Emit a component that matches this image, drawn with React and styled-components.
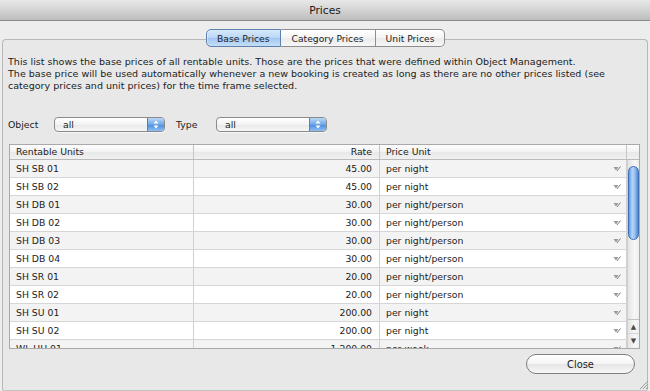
import styled, { createGlobalStyle } from "styled-components";

const GlobalStyle = createGlobalStyle`
  html, body {
    margin: 0;
    padding: 0;
    background: #ededed;
  }
  body {
    font-family: "DejaVu Sans", "Liberation Sans", sans-serif;
    font-size: 9.3px;
    color: #1c1c1c;
  }
`;

const rows = [
  { name: "SH SB 01", rate: "45.00", unit: "per night" },
  { name: "SH SB 02", rate: "45.00", unit: "per night" },
  { name: "SH DB 01", rate: "30.00", unit: "per night/person" },
  { name: "SH DB 02", rate: "30.00", unit: "per night/person" },
  { name: "SH DB 03", rate: "30.00", unit: "per night/person" },
  { name: "SH DB 04", rate: "30.00", unit: "per night/person" },
  { name: "SH SR 01", rate: "20.00", unit: "per night/person" },
  { name: "SH SR 02", rate: "20.00", unit: "per night/person" },
  { name: "SH SU 01", rate: "200.00", unit: "per night" },
  { name: "SH SU 02", rate: "200.00", unit: "per night" },
  { name: "WL UH 01", rate: "1,200.00", unit: "per week" },
];

const tabs = ["Base Prices", "Category Prices", "Unit Prices"];

function PopupArrows() {
  return (
    <svg width="6" height="9" viewBox="0 0 6 9">
      <path d="M3 0.5 L5.5 3.5 L0.5 3.5 Z" fill="#fff" />
      <path d="M3 8.5 L5.5 5.5 L0.5 5.5 Z" fill="#fff" />
    </svg>
  );
}

function CellArrow() {
  return (
    <svg width="8" height="6" viewBox="0 0 8 6">
      <path d="M0.5 1 L5.5 1 L3 4.5 Z" fill="#9a9a9a" />
      <path d="M4 5 L7.5 0.5" stroke="#7d7d7d" strokeWidth="1" fill="none" />
    </svg>
  );
}

function Select({ value }) {
  return (
    <SelectBox>
      <SelectValue>{value}</SelectValue>
      <SelectCap>
        <PopupArrows />
      </SelectCap>
    </SelectBox>
  );
}

export default function App() {
  return (
    <>
      <GlobalStyle />
      <Window>
        <TitleBar>Prices</TitleBar>
        <Tabs>
          {tabs.map((t, i) => (
            <Tab key={t} $active={i === 0} $first={i === 0} $last={i === tabs.length - 1}>
              {t}
            </Tab>
          ))}
        </Tabs>
        <Panel>
          <Description>
            This list shows the base prices of all rentable units. Those are the prices that were defined within Object Management.
            <br />
            The base price will be used automatically whenever a new booking is created as long as there are no other prices listed (see
            <br />
            category prices and unit prices) for the time frame selected.
          </Description>

          <Filters>
            <FilterLabel>Object</FilterLabel>
            <Select value="all" />
            <FilterLabel $gap>Type</FilterLabel>
            <Select value="all" />
          </Filters>

          <Table>
            <HeaderRow>
              <HeadCell>Rentable Units</HeadCell>
              <HeadCell $align="right">Rate</HeadCell>
              <HeadCell>Price Unit</HeadCell>
              <HeadCorner />
            </HeaderRow>
            <Body>
              <Rows>
                {rows.map((r, i) => (
                  <Row key={r.name} $odd={i % 2 === 0}>
                    <Cell>{r.name}</Cell>
                    <Cell $align="right">{r.rate}</Cell>
                    <UnitCell>
                      <span>{r.unit}</span>
                      <CellArrow />
                    </UnitCell>
                  </Row>
                ))}
              </Rows>
              <ScrollTrack>
                <Thumb />
                <Arrows>
                  <ArrowButton>▲</ArrowButton>
                  <ArrowButton>▼</ArrowButton>
                </Arrows>
              </ScrollTrack>
            </Body>
          </Table>

          <Footer>
            <CloseButton>Close</CloseButton>
          </Footer>
        </Panel>
        <Grip>
          <svg width="9" height="9" viewBox="0 0 9 9">
            <path d="M1 9 L9 1 M4 9 L9 4 M7 9 L9 7" stroke="#9a9a9a" strokeWidth="1" />
          </svg>
        </Grip>
      </Window>
    </>
  );
}

const Window = styled.div`
  position: relative;
  width: 650px;
  height: 391px;
  display: flex;
  flex-direction: column;
  background: #ededed;
  overflow: hidden;
`;

const TitleBar = styled.div`
  height: 20px;
  border-bottom: 1px solid #8a8a8a;
  background: linear-gradient(#e8e8e8, #d2d2d2 55%, #bcbcbc);
  display: flex;
  align-items: center;
  justify-content: center;
  font-size: 10.7px;
  color: #1a1a1a;
`;

const Tabs = styled.div`
  position: relative;
  z-index: 1;
  display: flex;
  align-self: flex-start;
  margin: 8px 0 -8px 206px;
  height: 18px;
`;

const Tab = styled.div`
  box-sizing: border-box;
  height: 18px;
  padding: 0 ${(p) => (p.$first || p.$last ? 10 : 11)}px;
  display: flex;
  align-items: center;
  font-size: 9.2px;
  color: #1e1e1e;
  border: 1px solid ${(p) => (p.$active ? "#5f82ad" : "#8e8e8e")};
  border-left-width: ${(p) => (p.$first ? 1 : 0)}px;
  border-radius: ${(p) => (p.$first ? "5px 0 0 5px" : p.$last ? "0 5px 5px 0" : "0")};
  background: ${(p) =>
    p.$active
      ? "linear-gradient(#d8e9fb, #b9d6f5 50%, #a2c7f1 52%, #c4def8)"
      : "linear-gradient(#ffffff, #f4f4f4 50%, #ebebeb 52%, #f6f6f6)"};
  box-shadow: ${(p) => (p.$active ? "inset 1px 0 0 rgba(255,255,255,0.4)" : "none")};
`;

const Panel = styled.div`
  flex: 1;
  margin: 0 2px;
  border: 1px solid #b8b8b8;
  border-bottom: 1px solid #c4c4c4;
  border-radius: 4px 4px 2px 2px;
  background: #e8e8e8;
  display: flex;
  flex-direction: column;
`;

const Description = styled.p`
  margin: 16px 0 0 5px;
  font-size: 9.55px;
  line-height: 12px;
  white-space: nowrap;
`;

const Filters = styled.div`
  display: flex;
  align-items: center;
  height: 16px;
  margin: 24px 0 0 5px;
`;

const FilterLabel = styled.span`
  width: ${(p) => (p.$gap ? 40 : 46)}px;
  margin-left: ${(p) => (p.$gap ? 11 : 0)}px;
`;

const SelectBox = styled.div`
  box-sizing: border-box;
  width: 111px;
  height: 15px;
  display: flex;
  border: 1px solid #8a8a8a;
  border-radius: 4px;
  overflow: hidden;
  background: linear-gradient(#ffffff, #f3f3f3 50%, #e8e8e8 52%, #f7f7f7);
  box-shadow: 0 1px 0 rgba(255, 255, 255, 0.6);
`;

const SelectValue = styled.span`
  flex: 1;
  padding-left: 8px;
  line-height: 13px;
`;

const SelectCap = styled.span`
  width: 16px;
  display: flex;
  align-items: center;
  justify-content: center;
  border-left: 1px solid #5d7fb0;
  background: linear-gradient(#b9d7f7, #6ea7e8 50%, #4a8ce0 52%, #8ec0f3);
`;

const Table = styled.div`
  margin: 12px 7px 0 6px;
  border: 1px solid #a9a9a9;
  background: #fff;
`;

const HeaderRow = styled.div`
  display: grid;
  grid-template-columns: 184px 186px 247px 1fr;
  height: 15px;
  box-sizing: border-box;
  border-bottom: 1px solid #b9b9b9;
  background: linear-gradient(#fdfdfd, #f2f2f2 50%, #e8e8e8 52%, #f1f1f1);
`;

const HeadCell = styled.div`
  border-right: 1px solid #c6c6c6;
  padding: 0 ${(p) => (p.$align === "right" ? 7 : 6)}px 0 6px;
  text-align: ${(p) => p.$align || "left"};
  line-height: 14px;
  color: #222;
`;

const HeadCorner = styled.div``;

const Body = styled.div`
  display: flex;
  height: 188px;
  overflow: hidden;
`;

const Rows = styled.div`
  width: 617px;
  display: flex;
  flex-direction: column;
`;

const Row = styled.div`
  flex: none;
  display: grid;
  grid-template-columns: 184px 186px 247px;
  height: 18px;
  box-sizing: border-box;
  border-bottom: 1px solid #d6d6d6;
  background: ${(p) => (p.$odd ? "#f3f3f3" : "#ffffff")};
`;

const Cell = styled.div`
  border-right: 1px solid #d0d0d0;
  padding: 0 ${(p) => (p.$align === "right" ? 7 : 6)}px 0 6px;
  text-align: ${(p) => p.$align || "left"};
  line-height: 17px;
  white-space: nowrap;
`;

const UnitCell = styled(Cell)`
  display: flex;
  align-items: center;
  justify-content: space-between;
  padding-right: 5px;
`;

const ScrollTrack = styled.div`
  flex: 1;
  display: flex;
  flex-direction: column;
  border-left: 1px solid #cfcfcf;
  background: linear-gradient(to right, #e4e4e4, #f7f7f7 60%, #eeeeee);
`;

const Thumb = styled.div`
  margin: 6px 0 0 0;
  height: 74px;
  border-radius: 6px;
  border: 1px solid #3f6fb5;
  box-sizing: border-box;
  background: linear-gradient(to right, #5f98df, #b5d5f7 35%, #9cc6f2 60%, #4f87d6);
`;

const Arrows = styled.div`
  margin-top: auto;
  margin-bottom: 1px;
  border-top: 1px solid #c2c2c2;
`;

const ArrowButton = styled.div`
  height: 13px;
  display: flex;
  align-items: center;
  justify-content: center;
  font-size: 7px;
  color: #4a4a4a;
  & + & {
    border-top: 1px solid #d4d4d4;
  }
`;

const Footer = styled.div`
  display: flex;
  justify-content: flex-end;
  margin: 5px 12px 0 0;
`;

const CloseButton = styled.button`
  width: 109px;
  height: 20px;
  box-sizing: border-box;
  border: 1px solid #7f7f7f;
  border-radius: 10px;
  background: linear-gradient(#ffffff, #f4f4f4 50%, #e6e6e6 52%, #f7f7f7);
  font-family: "DejaVu Sans", "Liberation Sans", sans-serif;
  font-size: 9.9px;
  color: #1c1c1c;
  padding: 0;
`;

const Grip = styled.div`
  position: absolute;
  right: 2px;
  bottom: 2px;
  width: 9px;
  height: 9px;
  display: flex;
`;
